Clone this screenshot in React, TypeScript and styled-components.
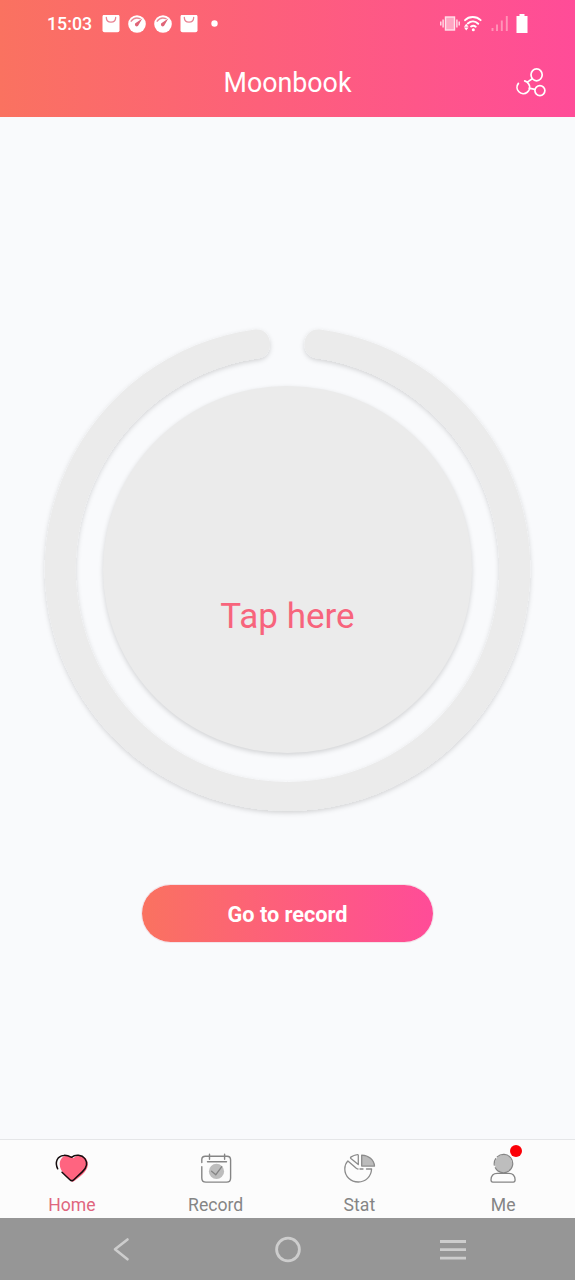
import React from 'react';
import styled, { createGlobalStyle } from 'styled-components';

const GlobalStyle = createGlobalStyle`
  *, *::before, *::after { box-sizing: border-box; }
  body { margin: 0; font-family: Roboto, "Liberation Sans", sans-serif; }
  svg { display: block; flex: none; }
  button { font: inherit; border: 0; padding: 0; margin: 0; background: none; }
`;

const brand = 'linear-gradient(90deg, #fa7260 0%, #fd607a 45%, #ff4c98 100%)';

const Screen = styled.div`
  width: 100%;
  height: 1280px;
  display: flex;
  flex-direction: column;
  background: #f9fafc;
  overflow: hidden;
`;

const Header = styled.header`
  height: 117px;
  flex: none;
  background: ${brand};
  color: #fff;
`;

const StatusBar = styled.div`
  height: 47px;
  display: flex;
  align-items: center;
  justify-content: space-between;
  padding: 0 47px 0 47px;
`;

const StatusGroup = styled.div<{ $gap: number }>`
  display: flex;
  align-items: center;
  gap: ${({ $gap }) => $gap}px;
`;

const Clock = styled.span`
  font-size: 17.8px;
  font-weight: 500;
  line-height: 22px;
  width: 47px;
  padding-top: 1px;
  white-space: nowrap;
`;

const DotSlot = styled.span`
  margin-left: 5px;
`;

const TitleBar = styled.div`
  height: 70px;
  display: grid;
  grid-template-columns: 60px 1fr 60px;
  align-items: center;
`;

const Title = styled.h1`
  grid-column: 2;
  margin: 0;
  padding-top: 2px;
  text-align: center;
  font-size: 26.8px;
  line-height: 32px;
  font-weight: 400;
`;

const Main = styled.main`
  flex: 1;
  display: flex;
  flex-direction: column;
  align-items: center;
  padding-top: 202px;
`;

const Dial = styled.div`
  display: grid;
  width: 505px;
  height: 500px;
  place-items: center;
  > * { grid-area: 1 / 1; }
`;

const TapButton = styled.button`
  width: 369px;
  height: 367px;
  border-radius: 50%;
  background: #ebebeb;
  box-shadow: 0 2px 5px rgba(0, 0, 0, 0.16);
  color: #f7647c;
  font-size: 35px;
  line-height: 42px;
  padding-top: 95px;
`;

const RecordButton = styled.button`
  width: 293px;
  height: 59px;
  margin-top: 65px;
  border-radius: 30px;
  background: ${brand};
  border: 1px solid rgba(235, 205, 215, 0.5);
  background-clip: padding-box;
  color: #fff;
  font-size: 21.7px;
  font-weight: 700;
  padding-top: 2px;
`;

const TabBar = styled.nav`
  height: 79px;
  flex: none;
  display: grid;
  grid-template-columns: repeat(4, 1fr);
  background: #fcfcfc;
  border-top: 1px solid #e5e6e8;
`;

const Tab = styled.a<{ $active?: boolean }>`
  display: flex;
  flex-direction: column;
  align-items: center;
  padding-top: 8px;
  gap: 6px;
  color: ${({ $active }) => ($active ? '#e0667e' : '#858585')};
  font-size: 17.6px;
  line-height: 23px;
`;

const IconBox = styled.span`
  position: relative;
  width: 40px;
  height: 40px;
`;

const Badge = styled.span`
  position: absolute;
  top: -3px;
  right: 0.8px;
  width: 12px;
  height: 12px;
  border-radius: 50%;
  background: #fb0007;
`;

const SystemNav = styled.div`
  height: 62px;
  flex: none;
  display: grid;
  grid-template-columns: 1fr auto 1fr;
  align-items: center;
  padding: 0 109px 0 112px;
  background: #969696;

  > :nth-child(2) { margin-right: 3px; }
  > :last-child { justify-self: end; }
`;

const BagIcon = () => (
  <svg width="18" height="18" viewBox="0 0.5 18 18">
    <rect x="0.5" y="0.2" width="17" height="17.5" rx="2" fill="#fff" />
    <path d="M4.3 3c.2 6.2 9.2 6.2 9.4 0" fill="none" stroke="#e98393" strokeWidth="1.3" strokeLinecap="round" />
  </svg>
);

const GaugeIcon = () => (
  <svg width="18" height="18" viewBox="0 0 18 18">
    <circle cx="9" cy="9" r="8.8" fill="#fff" />
    <path d="M3.2 6.2C5.5 2.8 9 2.6 12 3.6" fill="none" stroke="#ea8996" strokeWidth="1.5" strokeLinecap="round" />
    <path d="M14.3 3.6 10.4 10.2a1.8 1.8 0 1 1-2.7-2.1z" fill="#df6578" />
  </svg>
);

const DotIcon = () => (
  <svg width="7" height="7" viewBox="0 0 7 7"><circle cx="3.5" cy="3.5" r="3.2" fill="#fff" /></svg>
);

const VibrateIcon = () => (
  <svg width="20" height="15" viewBox="0 0 20 15" fill="none" stroke="#ffe0ea" strokeWidth="1.4">
    <rect x="5.5" y="1" width="9" height="13" fill="#ffa5c2" />
    <path d="M3.1 3.5v8M16.9 3.5v8M.8 5.6v3.8M19.2 5.6v3.8" />
  </svg>
);

const WifiIcon = () => (
  <svg width="19" height="16" viewBox="0.7 0 19 16" fill="none" stroke="#fff" strokeWidth="1.9" strokeLinecap="round">
    <path d="M1.8 4.2C5.7 0 13.1 0 17.3 4.2M4.5 7.5c3.3-2.8 7.4-2.6 10.4.3M7.8 10.5c1.4-1 3.3-.9 4.6.2" />
    <circle cx="10" cy="13.8" r="1.5" fill="#fff" stroke="none" />
    <path d="M.7 10.8 2.9 7.8 5.3 10.8zM.7 11.6 2.9 14.6 5.3 11.6z" fill="#fff" stroke="none" />
  </svg>
);

const SignalIcon = () => (
  <svg width="17" height="15" viewBox="0 0 17 15" stroke="#ff94b8" strokeWidth="1.9">
    <path d="M1.5 12v3M6 8.5V15M10.8 4.5V15M15.8 0v15" />
  </svg>
);

const BatteryIcon = () => (
  <svg width="12" height="19" viewBox="0 0 12 19" fill="#fff">
    <path d="M3.5 0h5v2H11.5v17H.5V2h3z" />
  </svg>
);

const ShareIcon = () => (
  <svg width="32" height="32" viewBox="0.5 1 32 32" fill="none" stroke="#fff" strokeWidth="1.7" strokeLinecap="round">
    <ellipse cx="22.1" cy="9.8" rx="5.6" ry="6" />
    <circle cx="25.4" cy="25.6" r="5" />
    <path d="M10.2 15.9A6.5 6.5 0 0 1 14.2 19A6.3 6.3 0 1 1 3.9 18.4M12.9 17.1l4.8-3.3M14.6 23.1l5.6 1.2" />
  </svg>
);

const RingDrawing = () => (
  <svg width="505" height="500" viewBox="35 319 505 500">
    <defs>
      <filter id="ringShadow" x="-5%" y="-5%" width="110%" height="110%">
        <feDropShadow dx="0" dy="2" stdDeviation="2.4" floodColor="#000" floodOpacity="0.16" />
      </filter>
    </defs>
    <path
      d="M320 329.6A242.7 241.7 0 1 1 255 329.6C264 328.5 270 335 270 344.5C270 352 265.5 357.5 257 358.6A211.8 212.8 0 1 0 318 358.6C309.5 357.5 304.5 352 304.5 344.5C304.5 335 311 328.5 320 329.6Z"
      fill="#ebebeb"
      filter="url(#ringShadow)"
    />
  </svg>
);

const HeartIcon = () => (
  <svg width="40" height="40" viewBox="0.5 0 40 40" fill="none">
    <path d="M21 34C15 30 8.5 23 8.2 16.5C8 7.5 17.5 4.7 22 10.3C27 4.7 36.8 8 36.3 17C36 23.5 27.5 30 21 34Z" fill="#ff6480" />
    <path d="M6.2 20.8C2.9 14.3 6 7.8 12.2 7.4C15.5 7.1 18 8.3 20 9.3C24 6.1 30.4 6.8 33.4 10.6C36.5 15 34.7 20 31 23.6L22.3 31.7C21 32.9 19.6 32.9 18.4 31.7L10.5 24.2" stroke="#160d0f" strokeWidth="1.5" strokeLinecap="round" strokeLinejoin="round" />
  </svg>
);

const CalendarIcon = () => (
  <svg width="40" height="40" viewBox="0 0 40 40" fill="none" stroke="#858585" strokeWidth="1.4" strokeLinecap="round">
    <circle cx="20.5" cy="23.4" r="7.6" fill="#bdbdbd" stroke="none" />
    <path d="M5.8 14.5v-3c0-2 1.5-3.2 3.5-3.2H31c2.2 0 3.6 1.4 3.6 3.6v18c0 2.5-1.6 4.2-4 4.2H10c-2.5 0-4.2-1.6-4.2-4.2V18.8M11.5 13.7h19M13.5 6.3v5M28.6 6.3v5" />
    <path d="m15.6 23.2 4.2 3.5 6-8" strokeWidth="1.3" />
  </svg>
);

const PieIcon = () => (
  <svg width="40" height="40" viewBox="0 0 40 40" fill="none" stroke="#8c8c8c" strokeWidth="1.3" strokeLinecap="round" strokeLinejoin="round">
    <path d="M22.7 7.1c7 .3 12.3 4.5 12.8 11H22.7z" fill="#bbb" />
    <path d="M19.3 16.5V7.5c0-.8-.5-1.1-1.2-.9-2.2.4-4.2 1.2-5.9 2.3-.8.5-.9 1-.3 1.6zM21 21h3M27.5 21h5.1c-.5 7.7-6 13-13.3 13C11.7 34 5.8 28.3 5.8 21c0-3.3 1.1-6 3.1-8.1L17 20.1c.6.6 1.2.9 2 .9" />
  </svg>
);

const PersonIcon = () => (
  <svg width="40" height="40" viewBox="0 0 40 40" fill="none" stroke="#858585" strokeWidth="1.3" strokeLinecap="round">
    <circle cx="20.5" cy="15.6" r="8.8" fill="#bdbdbd" stroke="none" />
    <path d="M14.2 8.9A9.2 9.2 0 1 1 12.3 19.7M11.3 17.2A9.2 9.2 0 0 1 12.7 10.7" strokeWidth="1.2" />
    <path d="M8 31.8c.2-4.7 2.4-6.4 6.2-6.4h11.7c3.8 0 6 1.7 6.2 6.4 0 1.6-.6 2.3-1.8 2.3H9.8c-1.2 0-1.8-.7-1.8-2.3z" />
  </svg>
);

const tabs = [
  { label: 'Home', icon: <HeartIcon />, active: true },
  { label: 'Record', icon: <CalendarIcon /> },
  { label: 'Stat', icon: <PieIcon /> },
  { label: 'Me', icon: <PersonIcon />, badge: true },
];

export default function App() {
  return (
    <Screen>
      <GlobalStyle />
      <Header>
        <StatusBar>
          <StatusGroup $gap={8}>
            <Clock>15:03</Clock>
            <BagIcon />
            <GaugeIcon />
            <GaugeIcon />
            <BagIcon />
            <DotSlot><DotIcon /></DotSlot>
          </StatusGroup>
          <StatusGroup $gap={8}>
            <StatusGroup $gap={4}>
              <VibrateIcon />
              <WifiIcon />
            </StatusGroup>
            <SignalIcon />
            <BatteryIcon />
          </StatusGroup>
        </StatusBar>
        <TitleBar>
          <Title>Moonbook</Title>
          <ShareIcon />
        </TitleBar>
      </Header>
      <Main>
        <Dial>
          <RingDrawing />
          <TapButton>Tap here</TapButton>
        </Dial>
        <RecordButton>Go to record</RecordButton>
      </Main>
      <TabBar>
        {tabs.map((tab) => (
          <Tab key={tab.label} $active={tab.active}>
            <IconBox>
              {tab.icon}
              {tab.badge && <Badge />}
            </IconBox>
            {tab.label}
          </Tab>
        ))}
      </TabBar>
      <SystemNav>
        <svg width="18" height="26" viewBox="0 0 18 26" fill="none" stroke="#cdcdcd" strokeWidth="2.6" strokeLinecap="round" strokeLinejoin="round">
          <path d="M15.5 3.5 3 13.3l12.5 10" />
        </svg>
        <svg width="28" height="28" viewBox="0 0 28 28" fill="none" stroke="#cdcdcd" strokeWidth="2.8">
          <circle cx="14" cy="14.5" r="11.4" />
        </svg>
        <svg width="26" height="24" viewBox="0 0 26 24" stroke="#cdcdcd" strokeWidth="2.8">
          <path d="M0 4.5h26M0 12.7h26M0 21.2h26" />
        </svg>
      </SystemNav>
    </Screen>
  );
}
